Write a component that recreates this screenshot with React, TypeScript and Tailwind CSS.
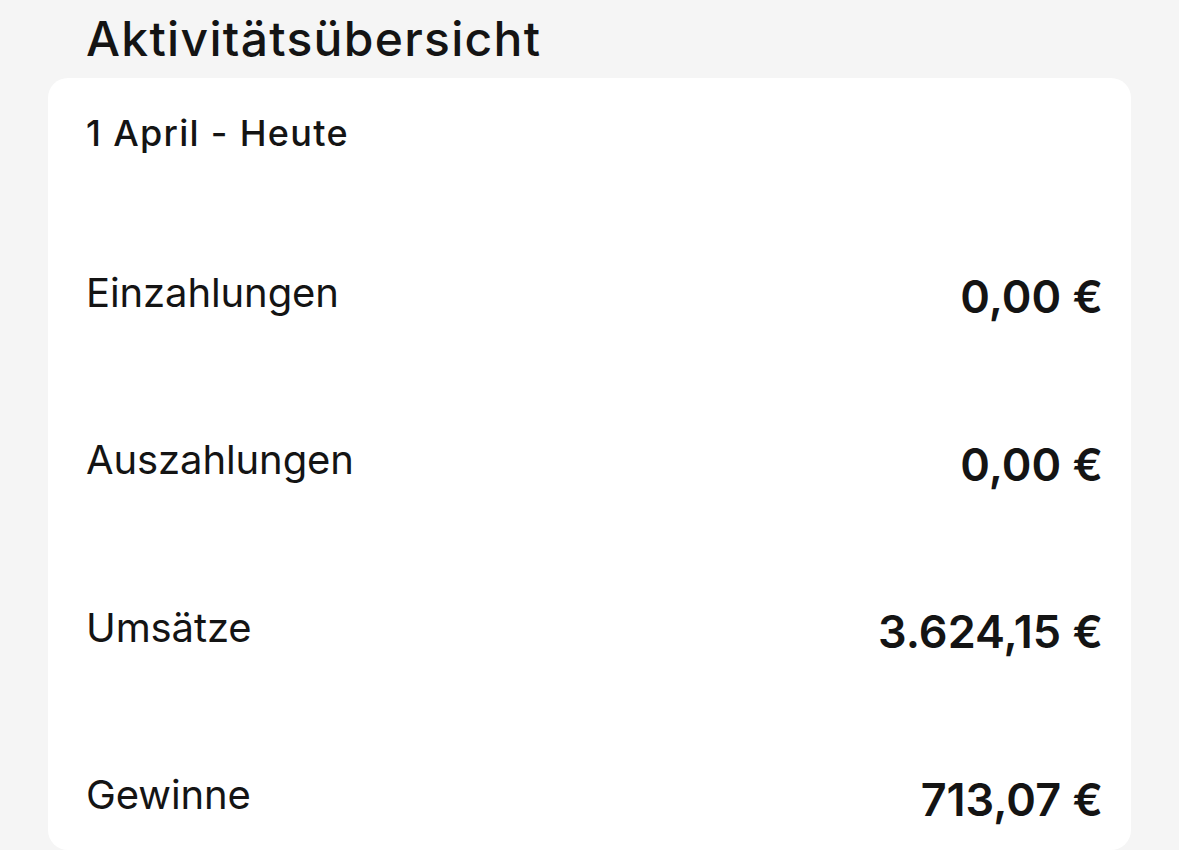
import React from 'react';

const rows = [
  { label: 'Einzahlungen', value: '0,00 €' },
  { label: 'Auszahlungen', value: '0,00 €' },
  { label: 'Umsätze', value: '3.624,15 €' },
  { label: 'Gewinne', value: '713,07 €' },
];

export default function App() {
  return (
    <div className="min-h-[850px] h-[850px] overflow-hidden bg-[#f5f5f5] px-[48px] font-['Inter',sans-serif] text-[#141414]">
      <h1 className="pt-[15px] pl-[38px] text-[48px] leading-[48px] font-medium tracking-[1.3px]">
        Aktivitätsübersicht
      </h1>

      <div className="mt-[15px] h-[772px] rounded-[20px] bg-white pt-[37px] pl-[38px] pr-[28px]">
        <p className="text-[36px] leading-[36px] font-medium tracking-[1.3px]">1 April - Heute</p>

        <div className="mt-[58px] flex flex-col">
          {rows.map((row) => (
            <div key={row.label} className="flex h-[167.5px] items-center justify-between">
              <span className="text-[40px] leading-[40px] tracking-[-0.1px]">{row.label}</span>
              <span className="mt-[8px] text-[45px] leading-[45px] font-semibold">{row.value}</span>
            </div>
          ))}
        </div>
      </div>
    </div>
  );
}
